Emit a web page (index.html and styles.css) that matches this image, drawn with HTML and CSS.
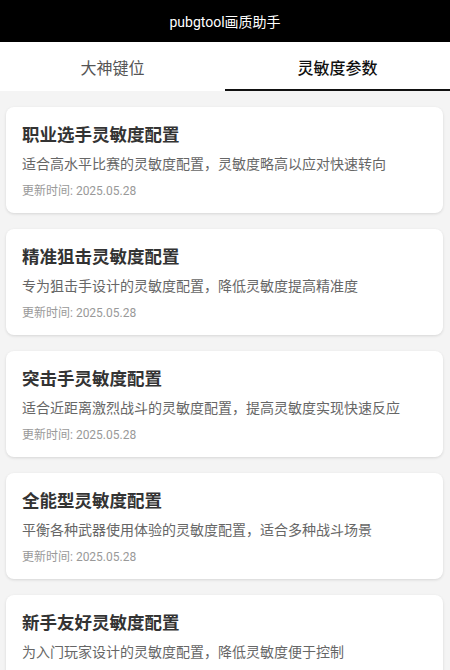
FILE: index.html
```html
<!DOCTYPE html>
<html lang="zh-CN">
<head>
<meta charset="utf-8">
<meta name="viewport" content="width=device-width, initial-scale=1">
<title>pubgtool画质助手</title>
<link rel="stylesheet" href="styles.css">
</head>
<body>
<header class="appbar">pubgtool画质助手</header>
<nav class="tabs">
  <div class="tab">大神键位</div>
  <div class="tab active">灵敏度参数</div>
</nav>
<main class="list">
  <section class="card">
    <h2 class="title">职业选手灵敏度配置</h2>
    <p class="desc">适合高水平比赛的灵敏度配置，灵敏度略高以应对快速转向</p>
    <p class="date">更新时间: 2025.05.28</p>
  </section>
  <section class="card">
    <h2 class="title">精准狙击灵敏度配置</h2>
    <p class="desc">专为狙击手设计的灵敏度配置，降低灵敏度提高精准度</p>
    <p class="date">更新时间: 2025.05.28</p>
  </section>
  <section class="card">
    <h2 class="title">突击手灵敏度配置</h2>
    <p class="desc">适合近距离激烈战斗的灵敏度配置，提高灵敏度实现快速反应</p>
    <p class="date">更新时间: 2025.05.28</p>
  </section>
  <section class="card">
    <h2 class="title">全能型灵敏度配置</h2>
    <p class="desc">平衡各种武器使用体验的灵敏度配置，适合多种战斗场景</p>
    <p class="date">更新时间: 2025.05.28</p>
  </section>
  <section class="card">
    <h2 class="title">新手友好灵敏度配置</h2>
    <p class="desc">为入门玩家设计的灵敏度配置，降低灵敏度便于控制</p>
    <p class="date">更新时间: 2025.05.28</p>
  </section>
</main>
</body>
</html>
```
FILE: styles.css
```css
* { box-sizing: border-box; }
html, body {
  margin: 0;
  padding: 0;
  background: #f4f4f4;
  font-family: Roboto, "Noto Sans CJK SC", sans-serif;
  height: 670px;
  overflow: hidden;
}
.appbar {
  height: 42px;
  background: #000;
  color: #fff;
  font-size: 14px;
  display: flex;
  align-items: center;
  justify-content: center;
}
.tabs {
  display: flex;
  background: #fff;
  height: 49px;
}
.tab {
  flex: 1;
  display: flex;
  align-items: center;
  justify-content: center;
  font-size: 16px;
  color: #555;
  border-bottom: 2px solid transparent;
  padding-top: 2px;
}
.tab.active {
  color: #111;
  font-weight: 500;
  border-bottom-color: #111;
}
.list {
  display: flex;
  flex-direction: column;
  gap: 16px;
  padding: 16px 7px 16px 6px;
}
.card {
  background: #fff;
  border-radius: 8px;
  padding: 15px 16px 14px;
  box-shadow: 0 1px 3px rgba(0,0,0,0.12);
}
.title {
  margin: 0;
  font-size: 17.5px;
  line-height: 26px;
  font-weight: 700;
  color: #333;
}
.desc {
  margin: 6px 0 0;
  font-size: 14px;
  line-height: 20px;
  color: #666;
}
.date {
  margin: 9px 0 0;
  font-size: 12px;
  line-height: 16px;
  color: #999;
}
```
